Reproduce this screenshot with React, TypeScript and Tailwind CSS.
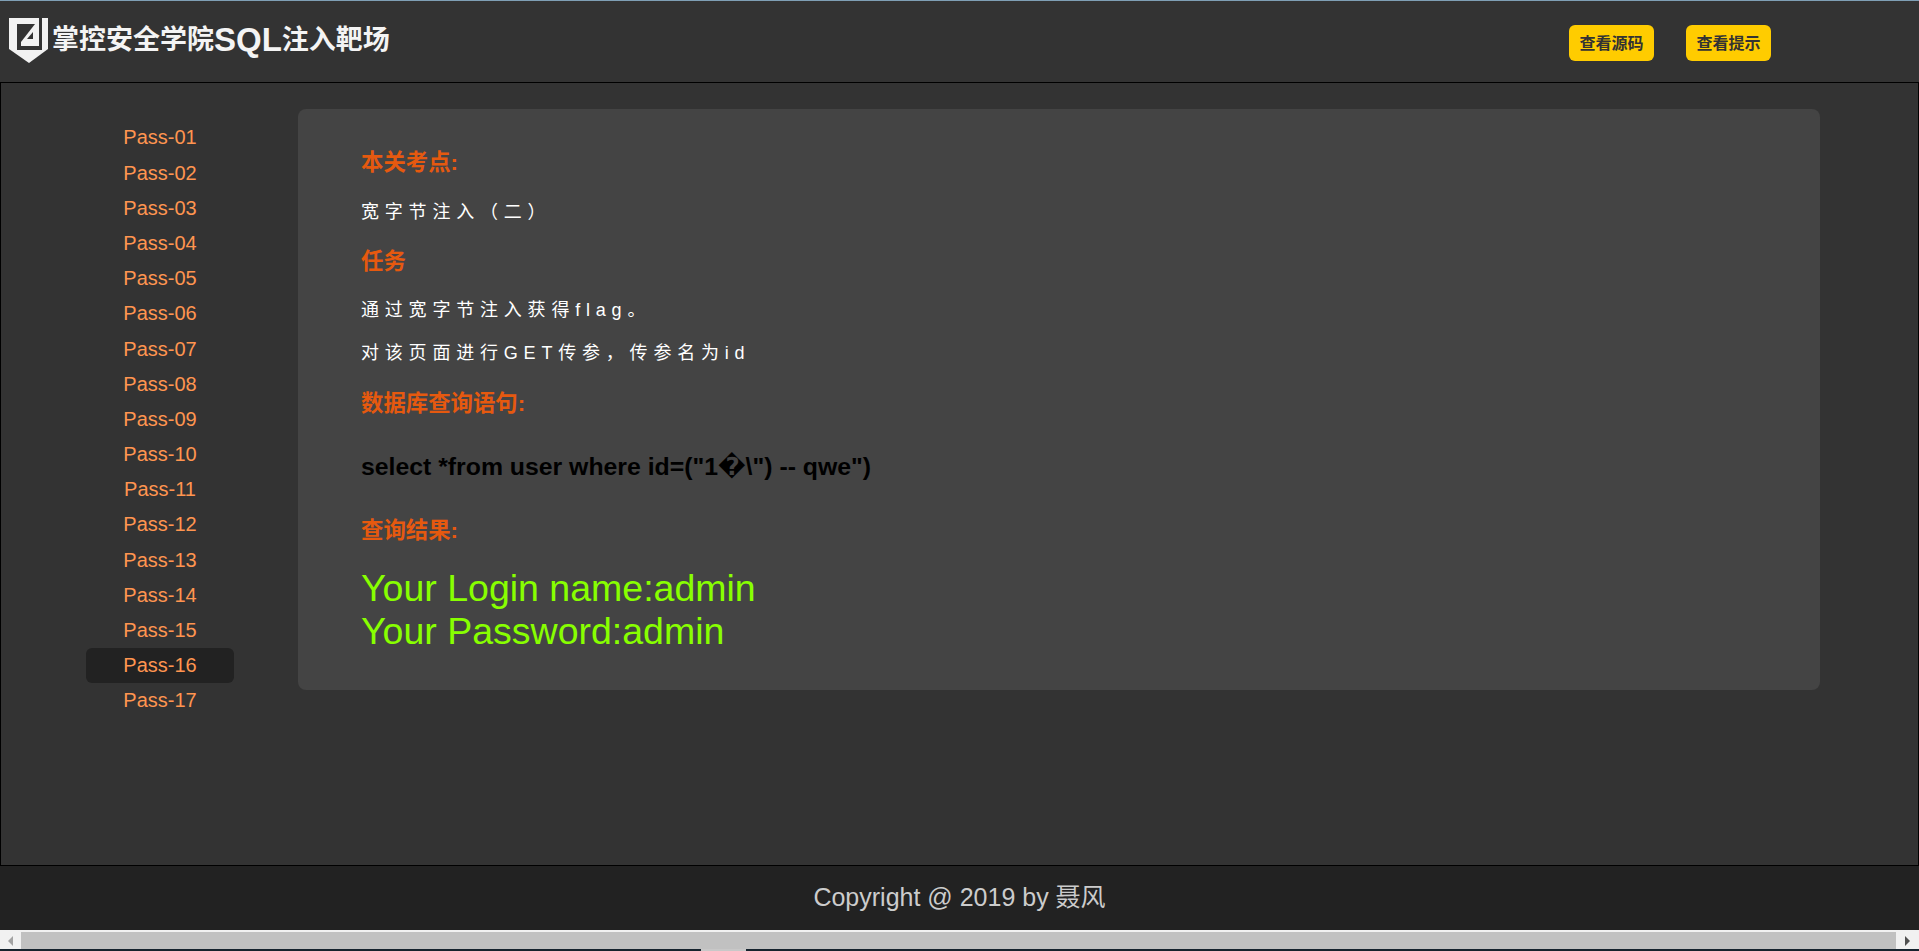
const passes = Array.from({ length: 17 }, (_, i) => `Pass-${String(i + 1).padStart(2, "0")}`);
const activePass = "Pass-16";

const font = "font-['Liberation_Sans','Noto_Sans_CJK_SC','DejaVu_Sans',sans-serif]";

function Logo() {
  return (
    <svg width="40" height="46" viewBox="0 0 40 46" className="shrink-0">
      <path d="M0 0H39V31L20 45L0 31Z" fill="#f2f2f2" />
      <path d="M8 6H30V0H33V32H8Z" fill="#333333" />
      <path d="M26 6H30V28H12V24Z" fill="#f2f2f2" />
      <path d="M24 14V21H18Z" fill="#333333" />
    </svg>
  );
}

function Heading({ children, className }: { children: string; className: string }) {
  return <h3 className={`h-[30px] text-[22.4px] leading-[30px] font-bold text-[#e6590f] ${className}`}>{children}</h3>;
}

function Body({ children, className }: { children: string; className: string }) {
  return <p className={`h-[30px] text-[18px] leading-[30px] tracking-[5.8px] text-white ${className}`}>{children}</p>;
}

export default function App() {
  return (
    <div className={`flex h-[951px] w-full flex-col overflow-hidden bg-[#333] ${font}`}>
      <div className="h-px bg-[#7f9fb5]" />

      {/* 顶部 */}
      <header className="flex h-[81px] items-start">
        <div className="ml-[9px] mt-[17px] flex items-start gap-[3px]">
          <Logo />
          <div className="mt-[5px] flex h-[34px] items-center whitespace-nowrap text-[27px] font-bold text-[#f4f4f4]">
            掌控安全学院<span className="text-[33px]">SQL</span>注入靶场
          </div>
        </div>
        <div className="ml-auto mr-[148px] mt-[24px] flex gap-8">
          <a className="flex h-9 w-[85px] items-center justify-center rounded-md bg-[#fc0] pt-px text-base font-bold text-[#333]">查看源码</a>
          <a className="flex h-9 w-[85px] items-center justify-center rounded-md bg-[#fc0] pt-px text-base font-bold text-[#333]">查看提示</a>
        </div>
      </header>

      <main className="flex min-h-0 flex-1 border border-black">
        {/* 关卡列表 */}
        <nav className="ml-[85px] mt-[36.8px] w-[148px] shrink-0">
          <ul>
            {passes.map((name) => (
              <li
                key={name}
                className={`flex h-[35.2px] items-center justify-center rounded-md text-[20px] text-[#ff9550] ${name === activePass ? "bg-[#222]" : ""}`}
              >
                {name}
              </li>
            ))}
          </ul>
        </nav>

        {/* 内容 */}
        <section className="ml-[64px] mt-[26px] h-[581px] w-[1522px] rounded-lg bg-[#444] pl-[63px] pt-[39px]">
          <Heading className="">本关考点:</Heading>
          <Body className="mt-[19px]">宽字节注入（二）</Body>
          <Heading className="mt-[20px]">任务</Heading>
          <Body className="mt-[18px]">通过宽字节注入获得flag。</Body>
          <Body className="mt-[13px]">对该页面进行GET传参，传参名为id</Body>
          <Heading className="mt-[21px]">数据库查询语句:</Heading>
          <p className="mt-[28px] h-10 text-[24.8px] leading-10 font-bold text-black">select *from user where id=("1�\") -- qwe")</p>
          <Heading className="mt-[29px]">查询结果:</Heading>
          <div className="mt-[21px] text-[37.5px] leading-[43px] text-[#88ff00]">
            <div>Your Login name:admin</div>
            <div>Your Password:admin</div>
          </div>
        </section>
      </main>

      <footer className="flex h-[64px] items-center justify-center bg-[#222] text-[25px] text-[#ccc]">
        Copyright @ 2019 by 聂风
      </footer>

      {/* 横向滚动条 */}
      <div className="flex h-[19px] bg-[#f1f1f1] pr-px">
        <div className="flex w-[21px] items-center justify-center pt-0.5">
          <div className="h-0 w-0 border-y-[5px] border-r-[5px] border-y-transparent border-r-[#a3a3a3]" />
        </div>
        <div className="mt-0.5 flex-1 bg-[#c1c1c1]" />
        <div className="flex w-[22px] items-center justify-center pt-0.5">
          <div className="h-0 w-0 border-y-[5px] border-l-[5px] border-y-transparent border-l-[#505050]" />
        </div>
      </div>

      {/* 底部任务栏 */}
      <div className="flex h-0.5 bg-[#16232e]">
        <div className="ml-[701px] w-[45px] bg-[#c8c8c8]" />
      </div>
    </div>
  );
}
